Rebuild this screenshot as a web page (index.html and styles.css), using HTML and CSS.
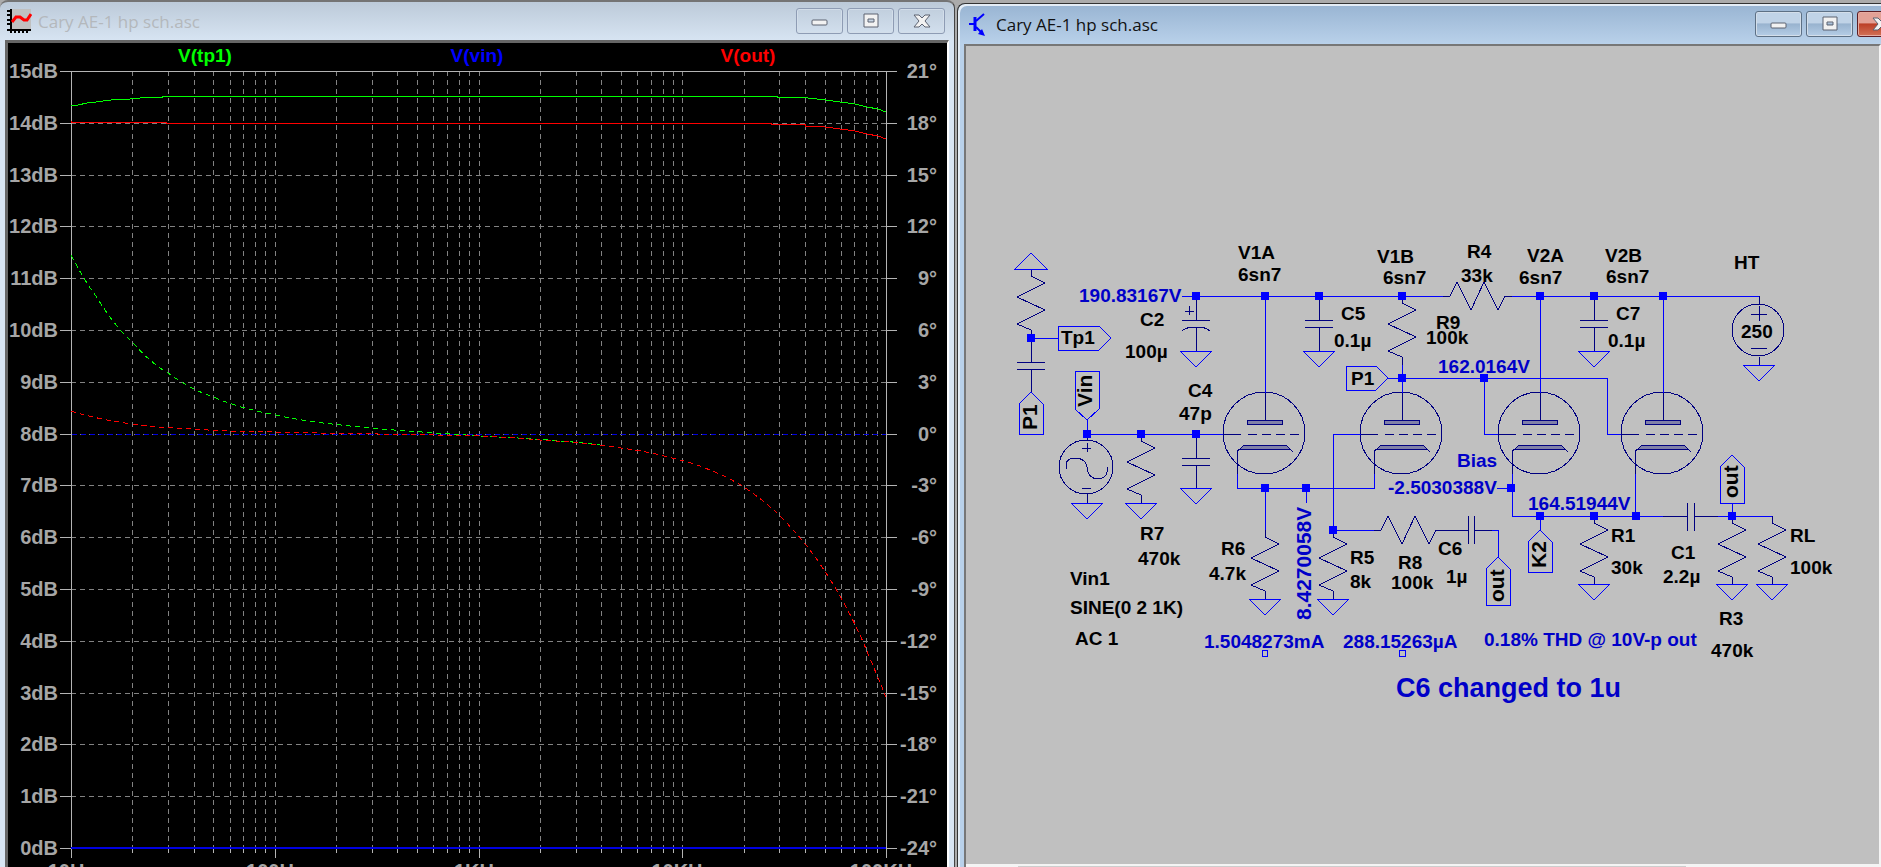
FILE: index.html
```html
<!DOCTYPE html>
<html lang="en">
<head>
    <meta charset="UTF-8">
    <meta name="viewport" content="width=device-width, initial-scale=1.0">
    <title>Cary AE-1 hp sch.asc</title>
    <link rel="stylesheet" href="styles.css">
</head>
<body>
    <div class="desktop">
        <section class="window plot-window">
            <header class="title-bar">
                <svg class="title-icon" viewBox="0 0 25 25">
                    <rect x="4" y="0" width="20" height="20" fill="#c0c0c0"/>
                    <path d="M4 0V24M0 21H24M0 2H4M0 6H4M0 11H4M0 15H4M8 20V24M12 20V24M16 20V24M20 20V24" stroke="#000" stroke-width="2" fill="none"/>
                    <path d="M5 13L9 8H13L17 11H20L24 5" stroke="#f00" stroke-width="3" fill="none"/>
                </svg>
                <h1 class="title">Cary AE-1 hp sch.asc</h1>
                <div class="controls">
                    <button class="control" aria-label="Minimize"><svg viewBox="0 0 18 16"><rect class="glyph" x="1" y="7" width="15" height="5" rx="1"/></svg></button>
                    <button class="control" aria-label="Restore"><svg viewBox="0 0 18 16"><path class="glyph" fill-rule="evenodd" d="M2 1H16V14H2ZM6 6V9H12V6Z"/></svg></button>
                    <button class="control" aria-label="Close"><svg viewBox="0 0 18 16"><path class="glyph" d="M1 2H6L9 5L12 2H17L12 8L17 14H12L9 11L6 14H1L6 8Z"/></svg></button>
                </div>
            </header>
            <div class="client">
                <svg class="plot" id="plot" viewBox="8 43 939 824">
                    <g id="grid" class="grid"></g>
                    <path class="axis" d="M60 71H897M71 71V858M886 71V858"/>
                    <g id="ticks" class="axis"></g>
                    <g id="labels" class="axis-text"></g>

                    <path class="trace phase vin" d="M72 434H886"/>
                    <path class="trace phase tp1" d="M71 255C79 270 86 283 96 296C107 314 118 329 132 342C143 354 154 365 168 373C183 384 198 392 216 398C234 406 255 411 276 415C302 421 330 424 360 427C400 431 440 433 479 436C520 438 560 440 600 445"/>
                    <path class="trace phase out" d="M71 411C90 417 110 421 132 424C152 427 172 428 192 429C220 431 248 432 276 432C344 434 412 434 479 436C500 437 520 438 540 440C560 441 580 443 600 445C620 448 640 450 660 455L684 461C705 467 726 476 744 487C757 496 769 505 780 516C793 529 805 543 816 558C824 570 833 583 840 596C849 612 857 628 864 644C871 661 879 680 886 697"/>
                    <path class="trace tp1" d="M71 106L78 105L87 103L96 102L111 100L130 99L150 97L162 97V96H777V97L808 98L826 100L840 102L855 104L867 107L878 109L886 112"/>
                    <path class="trace out" d="M71 121V122H166V123H771V124L805 125V126L825 127L840 129L855 131L867 134L878 136L886 139"/>
                    <path class="trace vin thick" d="M71 848H886"/>

                    <g class="trace-names">
                        <text class="name-tp1" x="205" y="62">V(tp1)</text>
                        <text class="name-vin" x="477" y="62">V(vin)</text>
                        <text class="name-out" x="748" y="62">V(out)</text>
                    </g>
                </svg>
            </div>
        </section>

        <section class="window schematic-window active">
            <header class="title-bar">
                <svg class="title-icon" viewBox="0 0 25 25">
                    <path d="M1 12H7M8 9L16 2M8 15L14 21" stroke="#00f" stroke-width="2" fill="none"/>
                    <path d="M7 5V19" stroke="#00f" stroke-width="3"/>
                    <path d="M17 24L10 22L14 17Z" fill="#00f"/>
                </svg>
                <h1 class="title">Cary AE-1 hp sch.asc</h1>
                <div class="controls">
                    <button class="control" aria-label="Minimize"><svg viewBox="0 0 18 16"><rect class="glyph" x="1" y="7" width="15" height="5" rx="1"/></svg></button>
                    <button class="control" aria-label="Restore"><svg viewBox="0 0 18 16"><path class="glyph" fill-rule="evenodd" d="M2 1H16V14H2ZM6 6V9H12V6Z"/></svg></button>
                    <button class="control close" aria-label="Close"><svg viewBox="0 0 18 16"><path class="glyph" d="M1 2H6L9 5L12 2H17L12 8L17 14H12L9 11L6 14H1L6 8Z"/></svg></button>
                </div>
            </header>
            <div class="client">
                <svg class="schematic" viewBox="966 46 913 818">
                    <defs>
                        <path id="res" d="M0 0V7L14 14L-14 28L14 41L-14 55L0 61V69"/>
                        <path id="res-h" d="M0 0H7L14 -14L28 14L41 -14L55 14L62 0H69"/>
                        <path id="cap" d="M0 0V24M-14 24H14M-14 31H14M0 31V55"/>
                        <path id="gnd" d="M-16 0H16L0 16Z"/>
                        <rect id="node" x="-4" y="-4" width="8" height="8"/>
                        <g id="tube">
                            <circle cx="-1" cy="0" r="41"/>
                            <path d="M0 -40V-13M-42 1H-24"/>
                            <path d="M-17 1H34" stroke-dasharray="9 5"/>
                            <rect class="plate" x="-18" y="-13" width="35" height="4"/>
                            <path class="plate" d="M-25 16L-21 12H21L25 16Z"/>
                            <path d="M-28 41V18L-25 16M25 16L28 19"/>
                        </g>
                    </defs>

                    <g class="part">
                        <use href="#res" x="1031" y="269"/>
                        <use href="#cap" x="1031" y="338"/>
                        <use href="#res" x="1141" y="434"/>
                        <use href="#cap" x="1196" y="434"/>
                        <use href="#cap" x="1319" y="296"/>
                        <use href="#cap" x="1594" y="296"/>
                        <use href="#res" x="1402" y="296"/>
                        <use href="#res" x="1265" y="530"/>
                        <use href="#res" x="1333" y="530"/>
                        <use href="#res" x="1594" y="516"/>
                        <use href="#res" x="1732" y="516"/>
                        <use href="#res" x="1772" y="516"/>
                        <use href="#res-h" x="1443" y="296"/>
                        <use href="#res-h" x="1374" y="530"/>
                        <use href="#tube" x="1265" y="433"/>
                        <use href="#tube" x="1402" y="433"/>
                        <use href="#tube" x="1540" y="433"/>
                        <use href="#tube" x="1663" y="433"/>
                        <!-- C2, polarized -->
                        <path d="M1196 296V320M1182 320H1210M1182 331Q1186 327 1196 327T1210 331M1196 327V351M1185 311H1194M1189 306V315"/>
                        <!-- C6 and C1 -->
                        <path d="M1443 530H1468M1468 516V544M1474 516V544M1474 530H1492"/>
                        <path d="M1663 516H1687M1687 503V531M1694 503V531M1694 516H1718"/>
                        <!-- signal source -->
                        <circle cx="1086" cy="467" r="27"/>
                        <path d="M1087 434V440M1087 494V503M1082 448H1091M1087 443V452M1082 488H1091M1066 469V463Q1068 458 1076 458Q1086 459 1087 467Q1088 478 1097 479Q1106 479 1107 472V467"/>
                        <!-- HT supply -->
                        <circle cx="1758" cy="330" r="26"/>
                        <path d="M1759 296V304M1759 357V365M1751 314H1767M1759 306V321M1751 348H1767"/>
                    </g>

                    <g class="wire">
                        <path d="M1182 296H1443M1512 296H1759"/>
                        <path d="M1265 296V393M1540 296V393M1663 296V393M1402 365V393"/>
                        <path d="M1031 338H1058M1087 420V434H1223"/>
                        <path d="M1388 378H1607V434H1621M1484 378V434H1498"/>
                        <path d="M1361 434H1333V530H1374"/>
                        <path d="M1237 474V488H1374V474M1265 488V530M1306 488V503"/>
                        <path d="M1497 488H1512M1512 474V516H1663M1635 474V516M1540 516V530"/>
                        <path d="M1492 530H1498V557M1718 516H1772M1732 503V516"/>
                        <path d="M1015 269H1047L1031 253Z"/>
                        <use href="#gnd" x="1196" y="351"/>
                        <use href="#gnd" x="1319" y="351"/>
                        <use href="#gnd" x="1594" y="351"/>
                        <use href="#gnd" x="1759" y="365"/>
                        <use href="#gnd" x="1087" y="503"/>
                        <use href="#gnd" x="1141" y="503"/>
                        <use href="#gnd" x="1196" y="488"/>
                        <use href="#gnd" x="1265" y="599"/>
                        <use href="#gnd" x="1333" y="599"/>
                        <use href="#gnd" x="1594" y="584"/>
                        <use href="#gnd" x="1732" y="584"/>
                        <use href="#gnd" x="1772" y="584"/>
                        <path d="M1058 326H1099L1111 338L1099 350H1058Z"/>
                        <path d="M1019 434V404L1031 392L1043 404V434Z"/>
                        <path d="M1075 371H1099V409L1087 420L1075 409Z"/>
                        <path d="M1346 366H1376L1388 378L1376 390H1346Z"/>
                        <path d="M1486 605V569L1498 557L1510 569V605Z"/>
                        <path d="M1528 572V542L1540 530L1552 542V572Z"/>
                        <path d="M1720 503V467L1732 455L1744 467V503Z"/>
                        <rect x="1262" y="650" width="5" height="6"/>
                        <rect x="1399" y="650" width="6" height="6"/>
                    </g>

                    <g class="nodes">
                        <use href="#node" x="1196" y="296"/>
                        <use href="#node" x="1265" y="296"/>
                        <use href="#node" x="1319" y="296"/>
                        <use href="#node" x="1402" y="296"/>
                        <use href="#node" x="1540" y="296"/>
                        <use href="#node" x="1594" y="296"/>
                        <use href="#node" x="1663" y="296"/>
                        <use href="#node" x="1031" y="338"/>
                        <use href="#node" x="1402" y="378"/>
                        <use href="#node" x="1484" y="378"/>
                        <use href="#node" x="1087" y="434"/>
                        <use href="#node" x="1141" y="434"/>
                        <use href="#node" x="1196" y="434"/>
                        <use href="#node" x="1265" y="488"/>
                        <use href="#node" x="1306" y="488"/>
                        <use href="#node" x="1511" y="488"/>
                        <use href="#node" x="1333" y="530"/>
                        <use href="#node" x="1540" y="516"/>
                        <use href="#node" x="1594" y="516"/>
                        <use href="#node" x="1636" y="516"/>
                        <use href="#node" x="1732" y="516"/>
                    </g>

                    <g class="label">
                        <text x="1238" y="259">V1A</text>
                        <text x="1238" y="281">6sn7</text>
                        <text x="1377" y="263">V1B</text>
                        <text x="1383" y="284">6sn7</text>
                        <text x="1467" y="258">R4</text>
                        <text x="1461" y="282">33k</text>
                        <text x="1527" y="262">V2A</text>
                        <text x="1519" y="284">6sn7</text>
                        <text x="1605" y="262">V2B</text>
                        <text x="1606" y="283">6sn7</text>
                        <text x="1734" y="269">HT</text>
                        <text x="1140" y="326">C2</text>
                        <text x="1125" y="358">100µ</text>
                        <text x="1188" y="397">C4</text>
                        <text x="1179" y="420">47p</text>
                        <text x="1341" y="320">C5</text>
                        <text x="1334" y="347">0.1µ</text>
                        <text x="1436" y="329">R9</text>
                        <text x="1426" y="344">100k</text>
                        <text x="1616" y="320">C7</text>
                        <text x="1608" y="347">0.1µ</text>
                        <text x="1741" y="338">250</text>
                        <text x="1061" y="344">Tp1</text>
                        <text x="1351" y="385">P1</text>
                        <text x="1140" y="540">R7</text>
                        <text x="1138" y="565">470k</text>
                        <text x="1070" y="585">Vin1</text>
                        <text x="1070" y="614">SINE(0 2 1K)</text>
                        <text x="1075" y="645">AC 1</text>
                        <text x="1221" y="555">R6</text>
                        <text x="1209" y="580">4.7k</text>
                        <text x="1350" y="564">R5</text>
                        <text x="1350" y="588">8k</text>
                        <text x="1398" y="569">R8</text>
                        <text x="1391" y="589">100k</text>
                        <text x="1438" y="555">C6</text>
                        <text x="1446" y="583">1µ</text>
                        <text x="1611" y="542">R1</text>
                        <text x="1611" y="574">30k</text>
                        <text x="1671" y="559">C1</text>
                        <text x="1663" y="583">2.2µ</text>
                        <text x="1790" y="542">RL</text>
                        <text x="1790" y="574">100k</text>
                        <text x="1719" y="625">R3</text>
                        <text x="1711" y="657">470k</text>
                    </g>
                    <g class="label upright">
                        <text transform="translate(1037 430) rotate(-90)">P1</text>
                        <text transform="translate(1092 407) rotate(-90)">Vin</text>
                        <text transform="translate(1504 602) rotate(-90)">out</text>
                        <text transform="translate(1546 568) rotate(-90)">K2</text>
                        <text transform="translate(1738 498) rotate(-90)">out</text>
                        <text class="value" transform="translate(1311 620) rotate(-90)">8.4270058V</text>
                    </g>
                    <g class="label value">
                        <text x="1079" y="302">190.83167V</text>
                        <text x="1438" y="373">162.0164V</text>
                        <text x="1457" y="467">Bias</text>
                        <text x="1388" y="494">-2.5030388V</text>
                        <text x="1528" y="510">164.51944V</text>
                        <text x="1204" y="648">1.5048273mA</text>
                        <text x="1343" y="648">288.15263µA</text>
                        <text x="1484" y="646">0.18% THD @ 10V-p out</text>
                    </g>
                    <text class="comment" x="1396" y="697">C6 changed to 1u</text>
                </svg>
                <div class="scrollbar"><div class="thumb"></div></div>
            </div>
        </section>
    </div>

    <script src="plot.js"></script>
</body>
</html>
```
FILE: styles.css
```css
* {
    box-sizing: border-box;
}
body {
    margin: 0;
    height: 100vh;
    overflow: hidden;
    background-color: #ababab;
    font-family: "Liberation Sans", Arial, sans-serif;
}
.desktop {
    display: grid;
    grid-template-columns: 957fr 924fr;
    height: 100vh;
    overflow: hidden;
}
.window {
    min-width: 0;
    overflow: hidden;
    border-radius: 8px 8px 0 0;
}
.plot-window {
    margin-right: 2px;
    padding: 0 5px;
    background-color: #d8e5f1;
    background-image: linear-gradient(#bccad9, #d8e5f3 40px);
    border-top: 2px solid #747474;
    border-right: 1px solid #444;
}
.schematic-window {
    margin-top: 3px;
    padding-left: 6px;
    background-color: #b9d1ea;
    background-image: linear-gradient(#98b4d2, #b9d1ea 40px);
    border-top: 1px solid #333;
    border-left: 1px solid #333;
    border-radius: 8px 0 0 0;
    box-shadow: inset 2px 2px 0 #e4edf6;
}
.title-bar {
    display: flex;
    align-items: center;
    height: 38px;
}
.active .title-bar {
    height: 40px;
}
.title-icon {
    width: 25px;
    height: 25px;
    margin-left: 2px;
}
.title {
    flex: 1;
    margin: 0 0 0 6px;
    font-family: "Open Sans", "Noto Sans", sans-serif;
    font-size: 17px;
    font-weight: normal;
    color: #b4b8bc;
}
.active .title {
    color: #111;
}
.active .title-icon {
    margin-left: 4px;
}
.active .title {
    margin-left: 3px;
}
.controls {
    display: flex;
    gap: 4px;
    margin-right: 4px;
}
.active .controls {
    margin-right: -23px;
}
.control {
    display: flex;
    align-items: center;
    justify-content: center;
    width: 47px;
    height: 26px;
    padding: 0;
    border: 1px solid #8e9cb4;
    border-radius: 3px;
    background: transparent;
    box-shadow: inset 0 0 0 1px #d3deea;
}
.control svg {
    width: 18px;
    height: 16px;
}
.active .control {
    border-color: #5d7085;
    background: linear-gradient(#c0d3e7 45%, #98b3cf 50%, #b5cde6);
}
.active .close {
    border-color: #5c1d24;
    background: linear-gradient(#e3a196 45%, #bc3f27 50%, #d27257);
    box-shadow: inset 0 0 0 1px #e6aca2;
}
.glyph {
    fill: #f2f2f2;
    stroke: #5d6371;
    stroke-width: 1;
}
.client {
    overflow: hidden;
}
.plot-window .client {
    background-color: #000;
    border-top: 3px solid #666;
    border-left: 3px solid #666;
    border-right: 2px solid #fff;
    height: 100%;
}
.schematic-window .client {
    background-color: #c0c0c0;
    border-top: 2px solid #777;
    border-left: 2px solid #777;
    border-right: 2px solid #f4f4f4;
}
.plot,
.schematic {
    display: block;
    width: 100%;
    height: auto;
}
.plot path,
.plot line,
.schematic path,
.schematic circle,
.schematic rect {
    shape-rendering: crispEdges;
}

/* plot */
.grid {
    stroke: #828282;
    stroke-dasharray: 5 4;
}
.axis {
    fill: none;
    stroke: #b4b4b4;
}
.axis-text {
    fill: #a6a6a6;
    font-size: 20px;
    font-weight: bold;
}
.trace {
    fill: none;
    stroke-width: 1;
}
.phase {
    stroke-dasharray: 5 4;
}
.thick {
    stroke-width: 2;
}
.tp1 {
    stroke: #00ff00;
}
.vin {
    stroke: #0000e0;
}
.out {
    stroke: #ff0000;
}
.trace-names {
    font-size: 19px;
    font-weight: bold;
    text-anchor: middle;
}
.name-tp1 {
    fill: #00ff00;
}
.name-vin {
    fill: #0000ff;
}
.name-out {
    fill: #ff0000;
}
.end {
    text-anchor: end;
}
.middle {
    text-anchor: middle;
}

/* schematic */
.part {
    fill: none;
    stroke: #000080;
}
.plate {
    fill: #8080a8;
}
.wire {
    fill: none;
    stroke: #0000ff;
}
.nodes {
    fill: #0000ff;
}
.label {
    fill: #000;
    font-size: 19px;
    font-weight: bold;
}
.upright {
    font-size: 21px;
}
.value {
    fill: #0000c8;
}
.comment {
    fill: #0000c8;
    font-size: 27px;
    font-weight: bold;
}
.scrollbar {
    height: 17px;
    padding: 2px 193px 2px 52px;
    background-color: #f4f4f4;
}
.thumb {
    height: 13px;
    background-color: #cdcdcd;
}
```
FILE: plot.js
```js
const SVG_NS = "http://www.w3.org/2000/svg";
const left = 71, right = 886, topY = 71, bottom = 848;

const grid = document.getElementById("grid");
const ticks = document.getElementById("ticks");
const labels = document.getElementById("labels");

function line(parent, x1, y1, x2, y2) {
    const el = document.createElementNS(SVG_NS, "line");
    el.setAttribute("x1", x1);
    el.setAttribute("y1", y1);
    el.setAttribute("x2", x2);
    el.setAttribute("y2", y2);
    parent.appendChild(el);
}

function label(x, y, text, cls) {
    const el = document.createElementNS(SVG_NS, "text");
    el.setAttribute("x", x);
    el.setAttribute("y", y);
    el.setAttribute("class", cls);
    el.textContent = text;
    labels.appendChild(el);
}

// Horizontal lines: 0..15 dB on the left, -24..21 degrees on the right
for (let db = 0; db <= 15; db++) {
    const y = Math.round(bottom - db * (bottom - topY) / 15);
    if (db > 0 && db < 15) line(grid, left, y, right, y);
    line(ticks, 60, y, left, y);
    line(ticks, right, y, 897, y);
    label(58, y + 7, db + "dB", "end");
    label(937, y + 7, (db * 3 - 24) + "°", "end");
}

// Log frequency lines, four decades from 10Hz
const decade = (right - left) / 4;
["10Hz", "100Hz", "1KHz", "10KHz", "100KHz"].forEach((name, i) => {
    const start = left + i * decade;
    label(Math.round(start), 878, name, "middle");
    if (i === 4) return;
    for (let n = 1; n < 10; n++) {
        const x = Math.round(start + Math.log10(n) * decade);
        if (x > left) line(grid, x, topY, x, bottom);
        line(ticks, x, bottom, x, n === 1 ? 858 : 853);
    }
});
```
